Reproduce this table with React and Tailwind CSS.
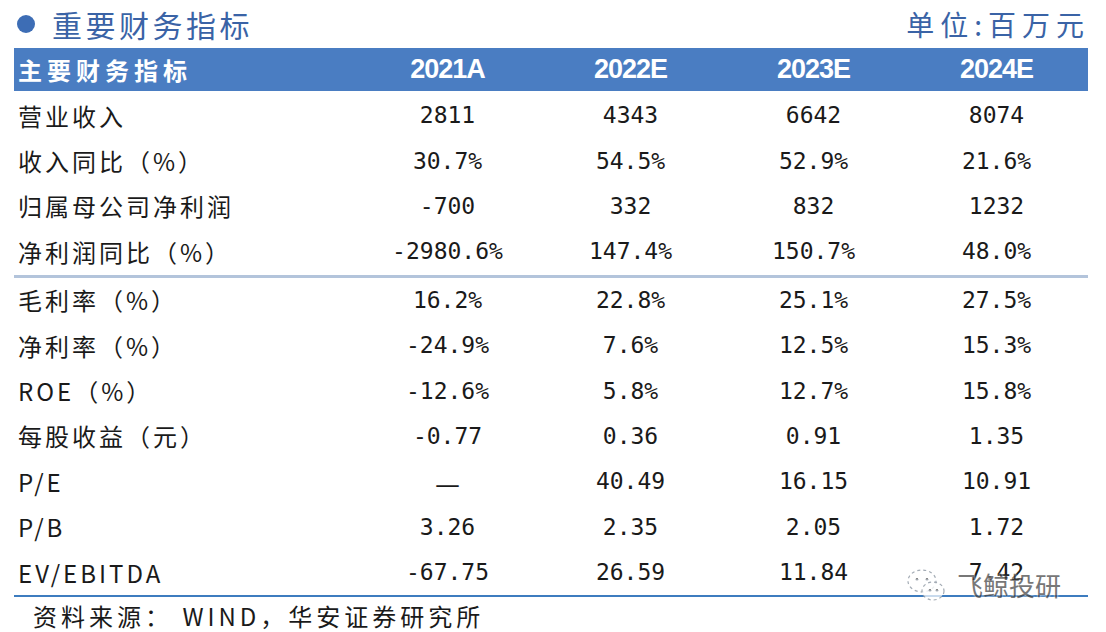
const cjk = { fontFamily: '"Noto Sans CJK SC", sans-serif' };
const mono = { fontFamily: '"DejaVu Sans Mono", "Noto Sans CJK SC", monospace' };

const topRows = [
  ['营业收入', '2811', '4343', '6642', '8074'],
  ['收入同比（%）', '30.7%', '54.5%', '52.9%', '21.6%'],
  ['归属母公司净利润', '-700', '332', '832', '1232'],
  ['净利润同比（%）', '-2980.6%', '147.4%', '150.7%', '48.0%'],
];

const bottomRows = [
  ['毛利率（%）', '16.2%', '22.8%', '25.1%', '27.5%'],
  ['净利率（%）', '-24.9%', '7.6%', '12.5%', '15.3%'],
  ['ROE（%）', '-12.6%', '5.8%', '12.7%', '15.8%'],
  ['每股收益（元）', '-0.77', '0.36', '0.91', '1.35'],
  ['P/E', '—', '40.49', '16.15', '10.91'],
  ['P/B', '3.26', '2.35', '2.05', '1.72'],
  ['EV/EBITDA', '-67.75', '26.59', '11.84', '7.42'],
];

const Row = ({ cells }) => (
  <div className="grid grid-cols-[342px_183px_183px_183px_183px] h-[45.4px] items-center">
    <div className="pl-[4px] text-[24px] tracking-[3px] text-[#1a1a1a] leading-none" style={cjk}>
      {cells[0]}
    </div>
    {cells.slice(1).map((v, i) =>
      v === '—' ? (
        <div key={i} className="text-center text-[28px] text-[#1a1a1a] leading-none" style={cjk}>
          {v}
        </div>
      ) : (
        <div key={i} className="text-center text-[23px] text-[#1a1a1a] leading-none" style={mono}>
          {v}
        </div>
      )
    )}
  </div>
);

export default function App() {
  return (
    <div className="w-[1106px] h-[632px] bg-white relative overflow-hidden">
      <div className="flex items-center justify-between h-[48px] pl-[17px] pr-[16px]">
        <div className="flex items-center">
          <div className="w-[18px] h-[18px] rounded-full bg-[#3d6db5]" />
          <span className="ml-[17px] text-[30px] tracking-[3.5px] text-[#3a63a6] leading-none" style={cjk}>
            重要财务指标
          </span>
        </div>
        <span className="text-[28px] tracking-[6px] text-[#3a63a6] leading-none" style={cjk}>
          单位:百万元
        </span>
      </div>

      <div className="ml-[14px] w-[1074px]">
        <div className="grid grid-cols-[342px_183px_183px_183px_183px] h-[43px] items-center bg-[#4a7dc2] text-white">
          <div className="pl-[4px] text-[24px] font-bold tracking-[5px] leading-none" style={cjk}>
            主要财务指标
          </div>
          {['2021A', '2022E', '2023E', '2024E'].map((y) => (
            <div key={y} className="text-center text-[27px] font-bold tracking-[-1px] leading-none" style={{ fontFamily: '"Liberation Sans", Arial, sans-serif' }}>
              {y}
            </div>
          ))}
        </div>

        <div className="pt-[2px]">
          {topRows.map((r) => (
            <Row key={r[0]} cells={r} />
          ))}
        </div>
        <div className="h-[3px] bg-[#b3c4db]" />
        <div>
          {bottomRows.map((r) => (
            <Row key={r[0]} cells={r} />
          ))}
        </div>
        <div className="h-[2px] bg-[#3d7cbf]" />
        <div className="pl-[19px] pt-[7px] text-[24px] tracking-[4px] text-[#1a1a1a] leading-none" style={cjk}>
          资料来源： WIND，华安证券研究所
        </div>
      </div>

      <div className="absolute left-[905px] top-[563px] flex items-center opacity-90">
        <svg width="44" height="44" viewBox="0 0 44 44" fill="none" stroke="#9aa3ad" strokeWidth="1.2" strokeDasharray="3 3">
          <ellipse cx="17" cy="18" rx="14" ry="11" fill="white" fillOpacity="0.7" />
          <ellipse cx="28" cy="28" rx="11" ry="9" fill="white" fillOpacity="0.8" />
          <circle cx="12" cy="16" r="1" fill="#555" />
          <circle cx="22" cy="16" r="1" fill="#555" />
          <circle cx="25" cy="27" r="1" fill="#555" />
          <circle cx="32" cy="27" r="1" fill="#555" />
        </svg>
        <span className="ml-[8px] text-[26px] text-[#444] leading-none opacity-80" style={{ ...cjk, textShadow: '0 0 2px #fff, 0 0 3px #fff' }}>
          飞鲸投研
        </span>
      </div>
    </div>
  );
}
